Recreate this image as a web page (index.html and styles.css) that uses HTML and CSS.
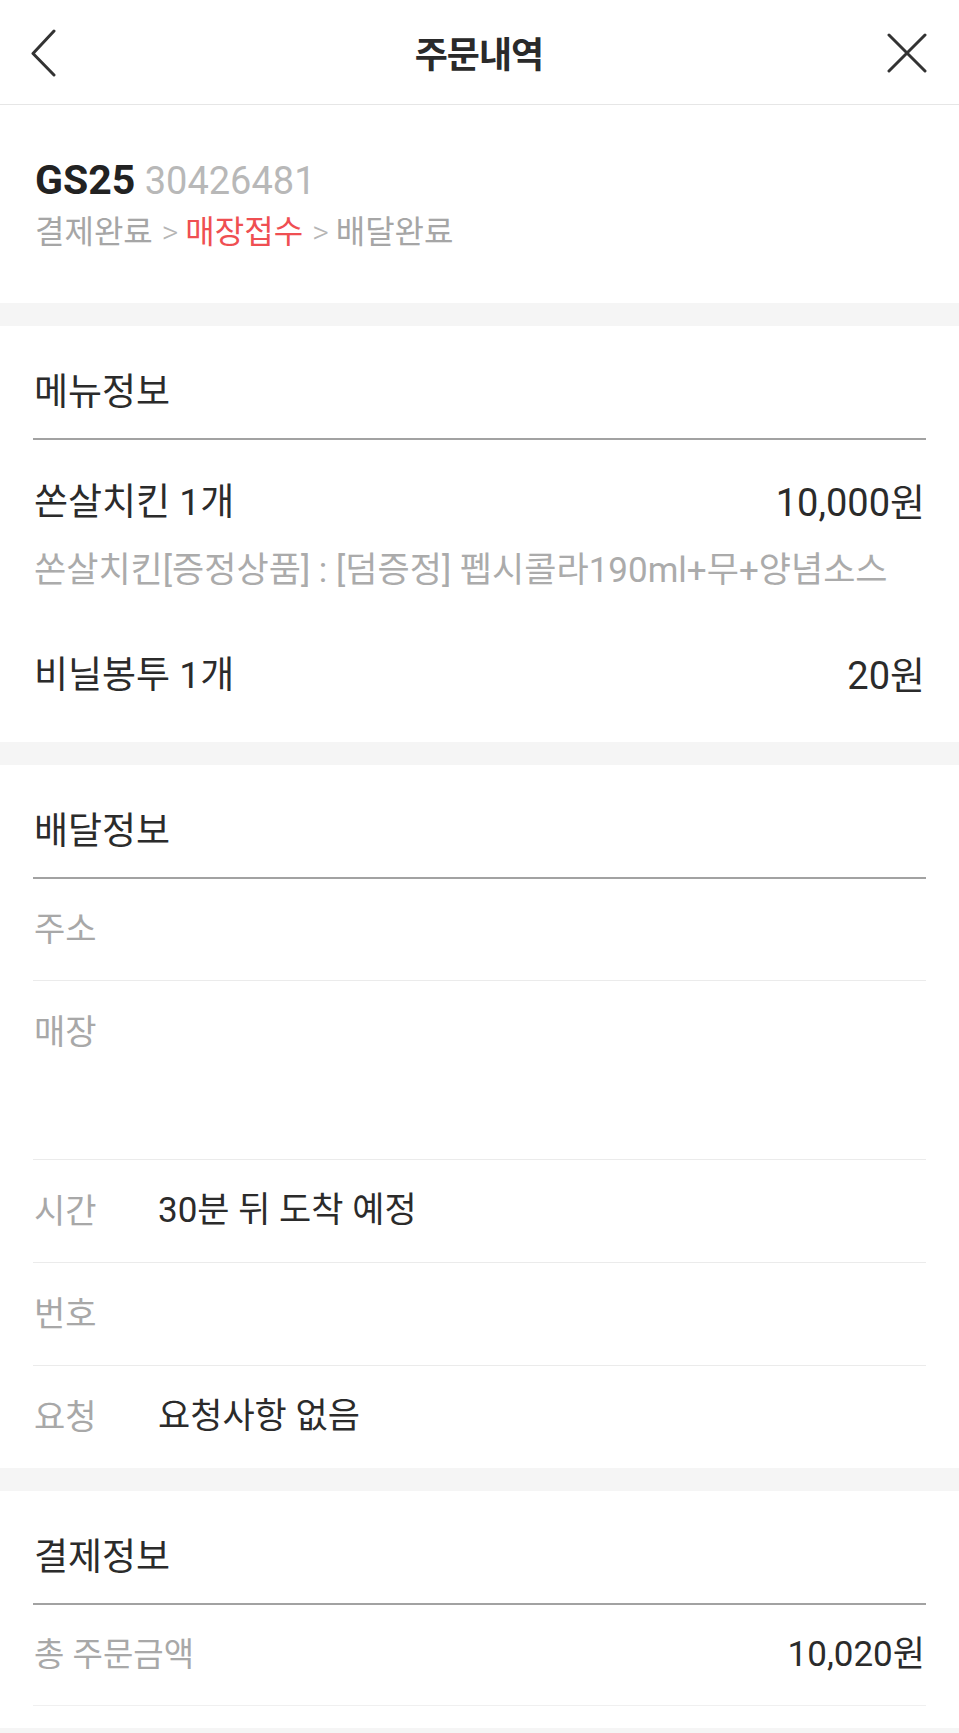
FILE: index.html
```html
<!DOCTYPE html>
<html lang="ko">
<head>
<meta charset="utf-8">
<title>주문내역</title>
<link rel="stylesheet" href="styles.css">
</head>
<body>
<header class="topbar">
  <button class="icon-btn back" aria-label="뒤로">
    <svg width="26" height="48" viewBox="0 0 26 48"><polyline points="23,2 2,24.5 23,46" fill="none" stroke="#333" stroke-width="3" stroke-linecap="round" stroke-linejoin="round"/></svg>
  </button>
  <h1 class="title">주문내역</h1>
  <button class="icon-btn close" aria-label="닫기">
    <svg width="40" height="40" viewBox="0 0 40 40"><path d="M2 2 L38 38 M38 2 L2 38" fill="none" stroke="#333" stroke-width="3" stroke-linecap="round"/></svg>
  </button>
</header>

<section class="card summary">
  <div class="store-line"><span class="store">GS25</span> <span class="order-no">30426481</span></div>
  <div class="status">
    <span>결제완료</span><span class="arrow">&gt;</span><span class="active">매장접수</span><span class="arrow">&gt;</span><span>배달완료</span>
  </div>
</section>

<section class="card">
  <h2 class="section-title">메뉴정보</h2>
  <ul class="menu-list">
    <li class="menu-item">
      <div class="menu-row"><span>쏜살치킨 1개</span><span class="price">10,000원</span></div>
      <div class="menu-option">쏜살치킨[증정상품] : [덤증정] 펩시콜라190ml+무+양념소스</div>
    </li>
    <li class="menu-item">
      <div class="menu-row"><span>비닐봉투 1개</span><span class="price">20원</span></div>
    </li>
  </ul>
</section>

<section class="card">
  <h2 class="section-title">배달정보</h2>
  <div class="info-list">
    <div class="info-row"><span class="label">주소</span><span class="value"></span></div>
    <div class="info-row store-row"><span class="label">매장</span><span class="value"></span></div>
    <div class="info-row"><span class="label">시간</span><span class="value">30분 뒤 도착 예정</span></div>
    <div class="info-row"><span class="label">번호</span><span class="value"></span></div>
    <div class="info-row"><span class="label">요청</span><span class="value">요청사항 없음</span></div>
  </div>
</section>

<section class="card pay">
  <h2 class="section-title">결제정보</h2>
  <div class="pay-row"><span class="label">총 주문금액</span><span class="amount">10,020원</span></div>
</section>
</body>
</html>
```

FILE: styles.css
```css
* { box-sizing: border-box; }

html, body {
  margin: 0;
  padding: 0;
}

body {
  background: #f5f5f5;
  font-family: Roboto, "Noto Sans CJK KR", sans-serif;
  color: #2b2b2b;
}

.topbar {
  height: 105px;
  background: #fff;
  border-bottom: 1px solid #e6e6e6;
  display: grid;
  grid-template-columns: 1fr auto 1fr;
  align-items: center;
  padding: 0 32px 0 31px;
}

.icon-btn {
  background: none;
  border: 0;
  padding: 0;
  display: flex;
}

.back { justify-self: start; margin-top: 2px; }
.close { justify-self: end; margin-top: 2px; }

.title {
  margin: 0;
  font-family: "Noto Sans CJK KR", sans-serif;
  font-weight: 700;
  font-size: 36px;
  color: #2a2a2a;
  letter-spacing: -1px;
}

.card {
  background: #fff;
  margin: 0 0 23px;
  padding: 0 33px;
}

.summary {
  padding: 50px 35px 49px;
}

.store-line {
  line-height: 50px;
  font-size: 38px;
}

.store {
  font-size: 41px;
  font-weight: 700;
  color: #222;
}

.order-no {
  color: #b8b8b8;
}

.status {
  margin-top: 4px;
  line-height: 44px;
  font-size: 32px;
  color: #a6a6a6;
  display: flex;
  align-items: center;
}

.status .arrow {
  margin: 0 7px 0 9px;
  color: #b5b5b5;
  font-weight: 300;
}

.status .active {
  color: #ef4f52;
}

.section-title {
  margin: 0;
  padding: 42px 1px 20px;
  line-height: 50px;
  font-size: 37px;
  font-weight: 400;
  color: #2b2b2b;
  border-bottom: 2px solid #a2a2a2;
}

.menu-list {
  list-style: none;
  margin: 0;
  padding: 8px 1px 11px;
}

.menu-item {
  padding: 30px 0;
}

.menu-item:first-child {
  padding-bottom: 25px;
}

.menu-row {
  display: flex;
  justify-content: space-between;
  align-items: center;
  height: 50px;
  line-height: 50px;
  font-size: 37px;
  color: #2b2b2b;
}

.menu-row .price {
  font-size: 38px;
}

.menu-option {
  margin-top: 18px;
  line-height: 50px;
  font-size: 35px;
  color: #ababab;
  white-space: nowrap;
}

.info-row {
  display: flex;
  padding: 29px 1px;
  line-height: 44px;
  border-bottom: 1px solid #ebebeb;
}

.info-row:first-child {
  padding-top: 28px;
}

.info-row:last-child {
  border-bottom: 0;
}

.label {
  width: 124px;
  flex: none;
  font-size: 34px;
  color: #a8a8a8;
}

.value {
  font-size: 35px;
  color: #2b2b2b;
}

.store-row .value {
  min-height: 120px;
}

.pay {
  padding-bottom: 22px;
}

.pay-row {
  display: flex;
  justify-content: space-between;
  align-items: center;
  height: 101px;
  padding: 0 1px;
  line-height: 44px;
  border-bottom: 1px solid #f0f0f0;
}

.pay-row .label {
  width: auto;
  font-size: 33px;
}

.amount {
  font-size: 35px;
  color: #2b2b2b;
}
```
